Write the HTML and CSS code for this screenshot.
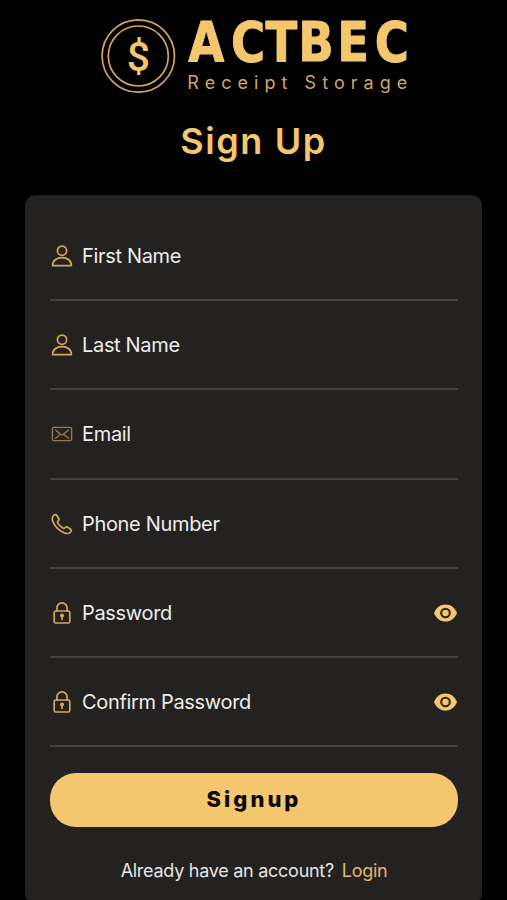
FILE: index.html
```
<!DOCTYPE html>
<html lang="en">
<head>
    <meta charset="UTF-8">
    <meta name="viewport" content="width=device-width, initial-scale=1.0">
    <title>ACTBEC - Sign Up</title>
    <link rel="stylesheet" href="styles.css">
</head>
<body>
    <!-- shared icons -->
    <svg class="icon-defs" width="0" height="0">
        <symbol id="icon-user" viewBox="0 0 22 22">
            <circle cx="11" cy="5.7" r="4.6"/>
            <path d="M1.6 20.6c0-5 4-8 9.4-8s9.4 3 9.4 8z"/>
        </symbol>
        <symbol id="icon-mail" viewBox="0 0 22 22">
            <rect x="1.4" y="4.4" width="19.2" height="13.2" rx="1.6"/>
            <path d="M4.5 7l5.2 4.4q1.3 1 2.6 0L17.5 7M4.5 15.2l3.8-3M17.5 15.2l-3.8-3"/>
        </symbol>
        <symbol id="icon-phone" viewBox="0 0 22 22">
            <path d="M2.2 3.1c1.2-1.5 2.5-2 3.5-.8l2 3.2c.7 1.2.1 1.9-.8 2.6-.8.7-.5 1.4.2 2.5 1.1 1.7 2.6 3.1 4.4 4.2 1.1.6 1.8.8 2.5 0 .7-.9 1.5-1.3 2.6-.6l3 2c1.3 1 .9 2-.3 3.1-1.6 1.6-3.7 1.5-6.3.4C7.9 17.5 4.2 13.8 2 8.9c-1-2.3-.9-4.3.2-5.8z"/>
        </symbol>
        <symbol id="icon-lock" viewBox="0 0 22 22">
            <rect x="3.2" y="9" width="15.6" height="12" rx="1.6"/>
            <path d="M5.9 9V6a5.1 5.1 0 0 1 10.2 0v3"/>
            <circle cx="11" cy="13.6" r="1.2" class="fill"/>
            <path d="M11 13.6v3.6"/>
        </symbol>
        <symbol id="icon-eye" viewBox="0 0 22 17">
            <path d="M11 .3C6 .3 1.9 3.4 0 8.5c1.9 5.1 6 8.2 11 8.2s9.1-3.1 11-8.2C20.1 3.4 16 .3 11 .3z" fill="#f4c66d"/>
            <circle cx="11" cy="8.5" r="4.1" fill="none" stroke="#2a251c" stroke-width="2"/>
        </symbol>
    </svg>

    <header>
        <svg class="logo" viewBox="0 0 307 76" role="img" aria-label="ACTBEC Receipt Storage">
            <circle cx="38.3" cy="38" r="36.2" class="ring"/>
            <circle cx="38.3" cy="38" r="30" class="ring"/>
            <text class="coin" x="38.5" y="52.8" text-anchor="middle">$</text>
            <text class="brand" transform="translate(0 43) scale(.84 1)" x="105 156 197 236 282.500 327">ACTBEC</text>
            <text class="tagline" x="87.3" y="71" textLength="220">Receipt Storage</text>
        </svg>
        <h1>Sign Up</h1>
    </header>

    <main>
        <form>
            <div class="field">
                <svg class="icon"><use href="#icon-user"/></svg>
                <input type="text" name="firstName" placeholder="First Name">
            </div>
            <div class="field">
                <svg class="icon"><use href="#icon-user"/></svg>
                <input type="text" name="lastName" placeholder="Last Name">
            </div>
            <div class="field">
                <svg class="icon thin"><use href="#icon-mail"/></svg>
                <input type="email" name="email" placeholder="Email">
            </div>
            <div class="field">
                <svg class="icon"><use href="#icon-phone"/></svg>
                <input type="tel" name="phone" placeholder="Phone Number">
            </div>
            <div class="field">
                <svg class="icon"><use href="#icon-lock"/></svg>
                <input type="password" name="password" placeholder="Password">
                <svg class="eye"><use href="#icon-eye"/></svg>
            </div>
            <div class="field">
                <svg class="icon"><use href="#icon-lock"/></svg>
                <input type="password" name="confirmPassword" placeholder="Confirm Password">
                <svg class="eye"><use href="#icon-eye"/></svg>
            </div>
            <button type="button">Signup</button>
            <p class="login">Already have an account? <a href="#">Login</a></p>
        </form>
    </main>
</body>
</html>
```
FILE: styles.css
```
* {
    box-sizing: border-box;
}
html {
    height: 100%;
    overflow: hidden;
    background-color: #000;
}
body {
    height: 100%;
    margin: 0;
    overflow: hidden;
    background-color: #000;
    font-family: Inter, Roboto, sans-serif;
}
.icon-defs {
    display: none;
}
header {
    height: 195px;
    padding-top: 18px;
    text-align: center;
}
.logo {
    display: block;
    width: 307px;
    height: 76px;
    margin: 0 auto;
    fill: #f4c66d;
    overflow: visible;
}
.ring {
    fill: none;
    stroke: #cfa65a;
    stroke-width: 1.7;
}
.coin {
    font: 500 41px Roboto, sans-serif;
}
.brand {
    font: 700 55.5px "DejaVu Sans", sans-serif;
    stroke: #f4c66d;
    stroke-width: 1;
    stroke-linejoin: round;
}
.tagline {
    font: 400 18px Inter, sans-serif;
    fill: #d0a75e;
}
h1 {
    margin: 25px 0 0;
    font-size: 36px;
    line-height: 44px;
    font-weight: 600;
    letter-spacing: 1.6px;
    color: #f4c66d;
}
main {
    height: 709px;
    margin: 0 25px;
    padding: 17px 24px 0 25px;
    background-color: #232220;
    border-radius: 11px;
}
.field {
    display: flex;
    align-items: center;
    height: 89.2px;
    padding: 1px 0 0 1px;
    border-bottom: 2px solid #434240;
}
.icon {
    width: 22px;
    height: 22px;
    margin-right: 9px;
    flex-shrink: 0;
    fill: none;
    stroke: #d3a75b;
    stroke-width: 1.7;
    stroke-linejoin: round;
    stroke-linecap: round;
}
.icon.thin {
    stroke: #94774a;
    stroke-width: 1.4;
}
.fill {
    fill: #d3a75b;
}
.eye {
    width: 23px;
    height: 18px;
    margin-right: 1px;
    flex-shrink: 0;
}
input {
    flex: 1;
    min-width: 0;
    padding: 0;
    border: none;
    outline: none;
    background: none;
    font: 400 20px Inter, sans-serif;
    letter-spacing: -0.33px;
    color: #eeedeb;
}
input::placeholder {
    color: #eeedeb;
    opacity: 1;
}
button {
    display: block;
    width: 100%;
    height: 54px;
    margin-top: 26px;
    padding: 0 0 2px;
    border: none;
    border-radius: 26px;
    background-color: #f4c66d;
    font: 800 22px Inter, sans-serif;
    letter-spacing: 3px;
    color: #080602;
    cursor: pointer;
}
.login {
    margin: 33px 0 0;
    font-size: 18px;
    line-height: 22px;
    letter-spacing: -0.27px;
    text-align: center;
    color: #e6e5e3;
}
.login a {
    margin-left: 3px;
    color: #e3b766;
    text-decoration: none;
}
```
